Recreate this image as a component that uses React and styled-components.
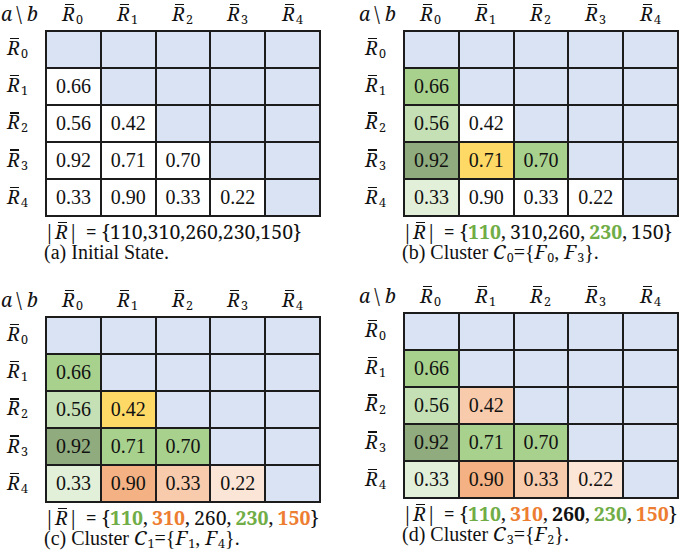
import React from "react";
import styled, { createGlobalStyle } from "styled-components";

const GlobalStyle = createGlobalStyle`
  html, body {
    margin: 0;
    padding: 0;
    background: #fff;
  }
`;

const MATH = `"Noto Serif", "Liberation Serif", serif`;

const FILLS = {
  w: "#ffffff",
  b: "#dae3f3",
  g0: "#e2f0d9",
  g1: "#c5e0b4",
  g2: "#a9d18e",
  g3: "#90ab7d",
  y: "#ffd966",
  o0: "#fbe5d6",
  o1: "#f8cbad",
  o2: "#f4b183",
};

const TONES = {
  green: "#70ad47",
  orange: "#ed7d31",
  bold: "#111",
};

const Figure = styled.div`
  display: grid;
  grid-template-columns: 358px 327px;
  grid-template-rows: 286px auto;
  width: 685px;
  height: 552px;
  font-family: "Liberation Serif", "Times New Roman", serif;
  color: #111;
`;

const PanelBox = styled.div`
  display: flex;
  flex-direction: column;
  margin-top: ${(p) => (p.$lift ? -4 : 0)}px;
`;

const HeadRow = styled.div`
  display: grid;
  grid-template-columns: 45px repeat(5, 55px);
  height: 30px;
  align-items: start;
  font-family: ${MATH};
  font-size: 19.5px;
  line-height: 27px;
`;

const Corner = styled.div`
  white-space: nowrap;
  padding-left: 1px;
`;

const Slash = styled.span`
  margin: 0 5px 0 4px;
`;

const ColHead = styled.div`
  display: flex;
  justify-content: center;
`;

const Body = styled.div`
  display: flex;
`;

const RowHeads = styled.div`
  width: 45px;
  display: flex;
  flex-direction: column;
`;

const RowHead = styled.div`
  height: 37.2px;
  box-sizing: border-box;
  padding: 0 0 2px 7px;
  display: flex;
  align-items: center;
  font-family: ${MATH};
  font-size: 19.5px;
  line-height: 27px;
`;

const Grid = styled.div`
  display: grid;
  grid-template-columns: repeat(5, 1fr);
  grid-template-rows: repeat(5, 1fr);
  width: 276px;
  height: 187px;
  box-sizing: border-box;
  gap: 2px;
  padding: 2px;
  background: #1c1c1c;
`;

const Cell = styled.div`
  background: ${(p) => FILLS[p.$fill]};
  display: flex;
  align-items: center;
  justify-content: center;
  font-size: 20px;
  color: #111;
`;

const Sym = styled.span`
  display: inline-block;
  white-space: nowrap;
`;

const Ital = styled.span`
  font-family: ${MATH};
  font-style: italic;
`;

const Over = styled.span`
  position: relative;
  font-family: ${MATH};
  font-style: italic;
  &::before {
    content: "";
    position: absolute;
    left: 3px;
    right: 1px;
    top: 0.19em;
    height: 1.5px;
    background: #111;
  }
`;

const Sub = styled.sub`
  font-family: ${MATH};
  font-size: 12.5px;
  font-style: normal;
  vertical-align: -3px;
  line-height: 0;
  margin-left: 1px;
`;

const Captions = styled.div`
  margin-top: 5px;
  padding-left: 44px;
  line-height: 20px;
  white-space: nowrap;
`;

const SizeLine = styled.div`
  font-family: ${MATH};
  font-size: 19.5px;
`;

const Eq = styled.span`
  margin: 0 5px 0 7px;
`;

const Num = styled.span`
  font-weight: ${(p) => (p.$tone ? 700 : 400)};
  color: ${(p) => (p.$tone ? TONES[p.$tone] : "#111")};
`;

const Comma = styled.span`
  margin-right: ${(p) => (p.$gap ? 4 : 0)}px;
`;

const CaptionLine = styled.div`
  font-size: 20px;
`;

const values = [
  [],
  ["0.66"],
  ["0.56", "0.42"],
  ["0.92", "0.71", "0.70"],
  ["0.33", "0.90", "0.33", "0.22"],
];

const panels = [
  {
    key: "a",
    fills: [[], ["w"], ["w", "w"], ["w", "w", "w"], ["w", "w", "w", "w"]],
    set: [{ v: "110" }, { v: "310" }, { v: "260" }, { v: "230" }, { v: "150" }],
    label: "a",
  },
  {
    key: "b",
    fills: [[], ["g2"], ["g1", "w"], ["g3", "y", "g2"], ["g0", "w", "w", "w"]],
    set: [
      { v: "110", t: "green", gap: true },
      { v: "310" },
      { v: "260", gap: true },
      { v: "230", t: "green", gap: true },
      { v: "150" },
    ],
    label: "b",
    cluster: 0,
    members: [0, 3],
  },
  {
    key: "c",
    fills: [[], ["g2"], ["g1", "y"], ["g3", "g2", "g2"], ["g0", "o2", "o1", "o0"]],
    set: [
      { v: "110", t: "green", gap: true },
      { v: "310", t: "orange", gap: true },
      { v: "260", gap: true },
      { v: "230", t: "green", gap: true },
      { v: "150", t: "orange" },
    ],
    label: "c",
    cluster: 1,
    members: [1, 4],
  },
  {
    key: "d",
    lift: true,
    fills: [[], ["g2"], ["g1", "o1"], ["g3", "g2", "g2"], ["g0", "o2", "o1", "o0"]],
    set: [
      { v: "110", t: "green", gap: true },
      { v: "310", t: "orange", gap: true },
      { v: "260", t: "bold", gap: true },
      { v: "230", t: "green", gap: true },
      { v: "150", t: "orange" },
    ],
    label: "d",
    cluster: 3,
    members: [2],
  },
];

const RBar = ({ i }) => (
  <Sym>
    <Over>R</Over>
    <Sub>{i}</Sub>
  </Sym>
);

const Matrix = ({ fills }) => {
  const cells = [];
  for (let r = 0; r < 5; r++) {
    for (let c = 0; c < 5; c++) {
      const lower = c < r;
      cells.push(
        <Cell key={r + "-" + c} $fill={lower ? fills[r][c] : "b"}>
          {lower ? values[r][c] : ""}
        </Cell>
      );
    }
  }
  return <Grid>{cells}</Grid>;
};

const SetLine = ({ items }) => (
  <SizeLine>
    |<Over>R</Over>|<Eq>=</Eq>
    {"{"}
    {items.map((it, i) => (
      <React.Fragment key={i}>
        <Num $tone={it.t}>{it.v}</Num>
        {i < items.length - 1 && <Comma $gap={it.gap}>,</Comma>}
      </React.Fragment>
    ))}
    {"}"}
  </SizeLine>
);

const Caption = ({ data }) => {
  if (data.cluster === undefined) {
    return <CaptionLine>({data.label}) Initial State.</CaptionLine>;
  }
  return (
    <CaptionLine>
      ({data.label}) Cluster <Ital>C</Ital>
      <Sub>{data.cluster}</Sub>={"{"}
      {data.members.map((m, i) => (
        <React.Fragment key={m}>
          {i > 0 && ", "}
          <Ital>F</Ital>
          <Sub>{m}</Sub>
        </React.Fragment>
      ))}
      {"}"}.
    </CaptionLine>
  );
};

const Panel = ({ data }) => (
  <PanelBox $lift={data.lift}>
    <HeadRow>
      <Corner>
        <Ital>a</Ital>
        <Slash>\</Slash>
        <Ital>b</Ital>
      </Corner>
      {[0, 1, 2, 3, 4].map((i) => (
        <ColHead key={i}>
          <RBar i={i} />
        </ColHead>
      ))}
    </HeadRow>
    <Body>
      <RowHeads>
        {[0, 1, 2, 3, 4].map((i) => (
          <RowHead key={i}>
            <RBar i={i} />
          </RowHead>
        ))}
      </RowHeads>
      <Matrix fills={data.fills} />
    </Body>
    <Captions>
      <SetLine items={data.set} />
      <Caption data={data} />
    </Captions>
  </PanelBox>
);

export default function App() {
  return (
    <>
      <GlobalStyle />
      <Figure>
        {panels.map((p) => (
          <Panel key={p.key} data={p} />
        ))}
      </Figure>
    </>
  );
}
